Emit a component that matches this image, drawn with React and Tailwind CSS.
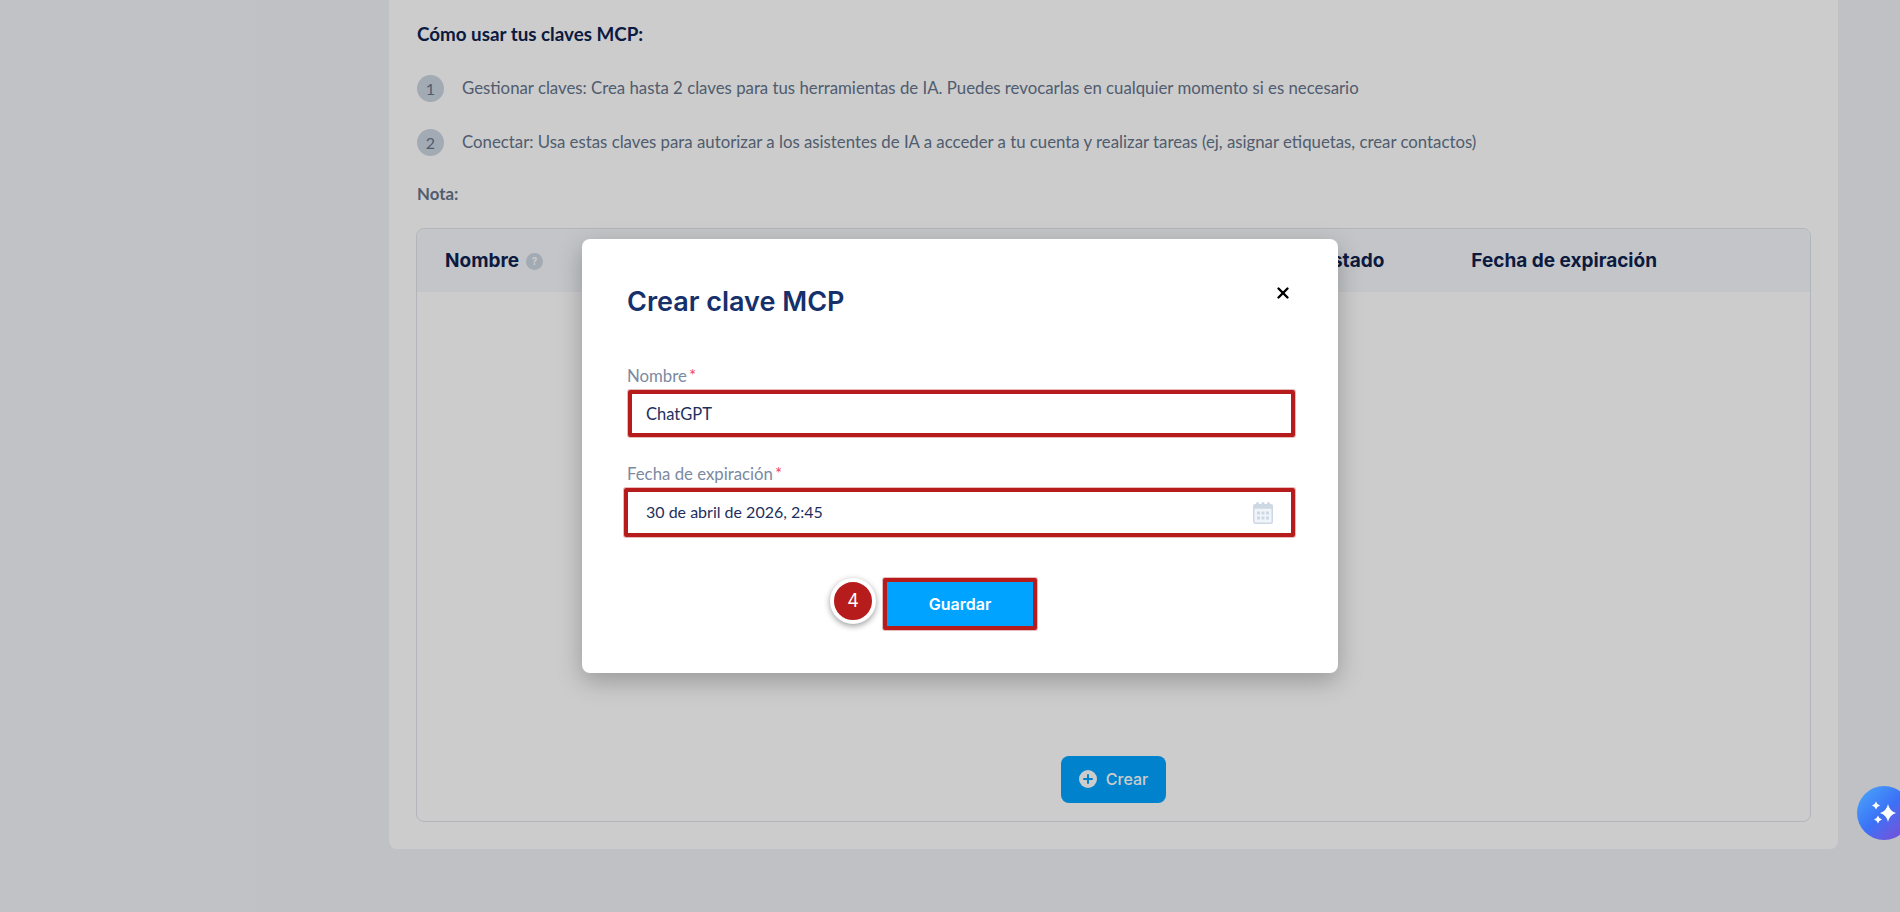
import { X } from "lucide-react";

const bodyFont = "font-['Lato','Liberation_Sans',sans-serif]";
const headFont = "font-['Inter','Liberation_Sans',sans-serif]";

const steps = [
  "Gestionar claves: Crea hasta 2 claves para tus herramientas de IA. Puedes revocarlas en cualquier momento si es necesario",
  "Conectar: Usa estas claves para autorizar a los asistentes de IA a acceder a tu cuenta y realizar tareas (ej, asignar etiquetas, crear contactos)",
];

function CalendarIcon() {
  return (
    <svg width="22" height="24" viewBox="0 0 22 24" className="shrink-0">
      <path d="M1 5a2 2 0 0 1 2-2h16a2 2 0 0 1 2 2v4H1z" fill="#cdd8e5" />
      <rect x="4" y="1" width="3" height="5" rx="1.5" fill="#cdd8e5" />
      <rect x="9.5" y="1" width="3" height="5" rx="1.5" fill="#cdd8e5" />
      <rect x="15" y="1" width="3" height="5" rx="1.5" fill="#cdd8e5" />
      <rect x="1.75" y="7" width="18.5" height="15.25" rx="1.5" fill="#f1f5f9" stroke="#cdd8e5" strokeWidth="1.5" />
      <g fill="#cdd8e5">
        <rect x="5" y="10.5" width="3" height="3" />
        <rect x="9.5" y="10.5" width="3" height="3" />
        <rect x="14" y="10.5" width="3" height="3" />
        <rect x="5" y="15.5" width="3" height="3" />
        <rect x="9.5" y="15.5" width="3" height="3" />
        <rect x="14" y="15.5" width="3" height="3" />
      </g>
    </svg>
  );
}

function Label({ children }) {
  return (
    <label className="block text-[16.8px] leading-5 text-[#7b8aa1]">
      {children}
      <span className="ml-0.5 text-[#ef4565]">*</span>
    </label>
  );
}

export default function App() {
  return (
    <div className={`relative h-screen overflow-hidden bg-[#f1f2f6] pl-[389px] pr-[62px] ${bodyFont}`}>
      {/* Page behind the modal */}
      <div className="flex h-[849px] flex-col rounded-b-lg bg-white px-[28px] pb-[27px]">
        <h3 className="mt-[23px] text-[18.8px] font-bold leading-[22px] text-[#0e2250]">Cómo usar tus claves MCP:</h3>
        <div className="mt-[30px] flex flex-col gap-[27px]">
          {steps.map((step, i) => (
            <div key={i} className="flex items-center gap-[18px]">
              <span className="flex h-[27px] w-[27px] items-center justify-center rounded-full bg-[#cbd5e1] text-[16px] text-[#64748b]">
                {i + 1}
              </span>
              <p className="pb-px text-[16.8px] leading-[26px] text-[#64748b]">{step}</p>
            </div>
          ))}
        </div>
        <p className="mt-[26px] text-[16.8px] font-bold leading-[24px] text-[#64748b]">Nota:</p>
        <div className="-mx-px mt-[22px] flex flex-1 flex-col rounded-lg border border-[#dfe4ea]">
          <div className={`flex h-[63px] items-center rounded-t-lg bg-[#f6f7fa] pl-[28px] pr-[153px] pt-px text-[19px] font-bold text-[#0e2250] ${headFont}`}>
            <span>Nombre</span>
            <span className="ml-[7px] flex h-[17px] w-[17px] items-center justify-center rounded-full bg-[#cbd5e1] text-[10px] text-white">?</span>
            <span className="ml-auto">Estado</span>
            <span className="ml-[87px]">Fecha de expiración</span>
          </div>
          <div className="flex flex-1 items-end justify-center pb-[18px]">
            <button className={`flex h-[47px] w-[105px] items-center justify-center gap-[9px] rounded-lg bg-[#00a3ff] pb-[2px] text-[16px] font-medium text-white ${headFont}`}>
              <svg width="18" height="18" viewBox="0 0 18 18">
                <circle cx="9" cy="9" r="9" fill="#fff" />
                <path d="M9 5v8M5 9h8" stroke="#00a3ff" strokeWidth="2" strokeLinecap="round" />
              </svg>
              Crear
            </button>
          </div>
        </div>
      </div>

      {/* Overlay and modal */}
      <div className="absolute inset-0 flex items-center justify-center bg-black/20 pl-5">
        <div className="h-[434px] w-[756px] rounded-lg bg-white pl-[45px] pr-[43px] pt-[43px] shadow-[0_8px_24px_rgba(0,0,0,0.25)]">
          <div className="flex items-start justify-between pr-[3px]">
            <h2 className={`text-[27px] font-semibold leading-[40px] text-[#15306b] ${headFont}`}>Crear clave MCP</h2>
            <X size={18} strokeWidth={3.2} className="mt-[2px] text-black" />
          </div>
          <div className="mt-[44px]">
            <Label>Nombre</Label>
            <div className="ml-[1px] mt-[4px] flex h-[47px] items-center rounded-[2px] border-4 border-[#b71c1c] pl-[14px] pt-px text-[16.5px] text-[#1e2f5e] ring-1 ring-[#b71c1c]/30">
              ChatGPT
            </div>
          </div>
          <div className="-ml-[3px] mt-[27px]">
            <div className="ml-[3px]">
              <Label>Fecha de expiración</Label>
            </div>
            <div className="mt-[4px] flex h-[49px] items-center justify-between rounded-[2px] border-4 border-[#b71c1c] pl-[18px] pr-[17px] text-[16px] text-[#1e2f5e] ring-1 ring-[#b71c1c]/30">
              <span className="pb-px">30 de abril de 2026, 2:45</span>
              <CalendarIcon />
            </div>
          </div>
          <div className="-ml-[2px] mt-[41px] flex justify-center">
            <div className="relative">
              <span className={`absolute right-full top-0 mr-[7px] flex h-[46px] w-[46px] items-center justify-center rounded-full border-4 border-white bg-[#b71c1c] pb-[2px] text-[18px] text-white shadow-[0_2px_6px_rgba(0,0,0,0.4)] ${headFont}`}>
                4
              </span>
              <button className={`h-[52px] w-[154px] rounded-[2px] border-4 border-[#b71c1c] bg-[#00a3ff] pb-px text-[16px] font-semibold text-white ring-1 ring-[#b71c1c]/30 ${headFont}`}>
                Guardar
              </button>
            </div>
          </div>
        </div>
      </div>

      {/* Assistant button */}
      <div className="absolute -right-[11px] top-[786px] flex h-[54px] w-[54px] items-center justify-center rounded-full bg-linear-to-br from-[#4fa8fb] via-[#3b70f6] to-[#7a45cf]">
        <svg width="54" height="54" viewBox="0 0 54 54" fill="#fff">
          <path d="M31 18q1.500 7 8 9q-6.500 2-8 9q-1.500-7-8-9q6.500-2 8-9z" />
          <path d="M19 15.500q.8 3 4 4q-3.200 1-4 4q-.8-3-4-4q3.200-1 4-4z" />
          <path d="M21 29.500q.8 3 4 4q-3.200 1-4 4q-.8-3-4-4q3.200-1 4-4z" />
        </svg>
      </div>
    </div>
  );
}
